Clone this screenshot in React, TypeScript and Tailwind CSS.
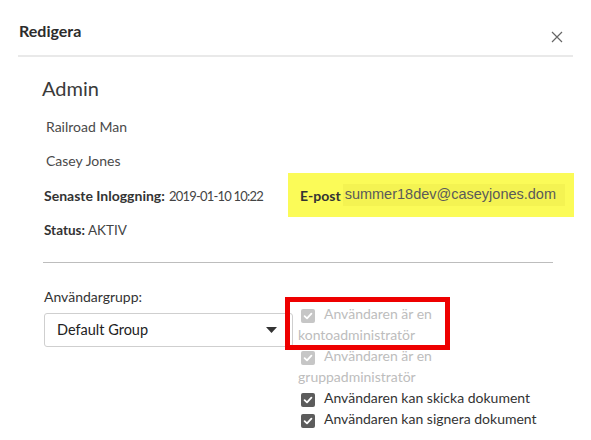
function Check({ disabled }: { disabled?: boolean }) {
  return (
    <span
      className={`inline-flex items-center justify-center w-[14px] h-[14px] rounded-[2px] ml-[3px] mr-[9px] align-[-2px] ${disabled ? 'bg-[#c6c6c6]' : 'bg-[#5c5c5c]'}`}
    >
      <svg width="10" height="10" viewBox="0 0 10 10">
        <path d="M1.6 5.2 L4 7.4 L8.4 2.6" fill="none" stroke="#fff" strokeWidth="1.8" strokeLinecap="round" strokeLinejoin="round" />
      </svg>
    </span>
  );
}

export default function App() {
  return (
    <div className="w-[591px] h-[440px] bg-white overflow-hidden relative text-[#333]" style={{ fontFamily: 'Lato, "Open Sans", sans-serif' }}>
      {/* header */}
      <div className="mx-[18px] flex items-start justify-between pt-[20px] h-[57px] border-b-2 border-[#e9e9e9]">
        <h2 className="ml-px text-[16px] leading-[22px] font-bold text-[#2c2c2c]">Redigera</h2>
        <svg width="12" height="12" viewBox="0 0 12 12" className="mt-[11px] mr-[10px]">
          <path d="M1 1 L11 11 M11 1 L1 11" stroke="#666" strokeWidth="1.2" />
        </svg>
      </div>

      <div className="pl-[43px] pr-[38px]">
        <div className="ml-[-1px] pt-[18px] text-[20px] leading-[26px] text-[#3a3a3a]">Admin</div>
        <div className="ml-[3px] mt-[16px] text-[14px] leading-[20px] text-[#4a4a4a]">Railroad Man</div>
        <div className="ml-[3px] mt-[14px] text-[14px] leading-[20px] text-[#4a4a4a]">Casey Jones</div>

        <div className="flex items-center mt-[2px] -mr-[21px]">
          <div className="w-[244px] ml-px text-[#444]">
            <span className="font-bold text-[14px] text-[#333]">Senaste Inloggning:</span>{' '}
            <span className="text-[13px] tracking-[-0.8px]">2019-01-10 10:22</span>
          </div>
          <div className="flex-1 h-[44px] bg-[#fbfb58] flex items-center pl-[12px] pr-[9px]">
            <span className="font-bold text-[14px] text-[#333]">E-post</span>
            <span className="ml-[2px] flex-1 h-[22px] bg-[#f4f352] flex items-center pl-[2px] text-[14.5px] text-[#5a5a5a]" style={{ fontFamily: '"Liberation Sans", Arial, sans-serif' }}>
              summer18dev@caseyjones.dom
            </span>
          </div>
        </div>

        <div className="ml-px mt-[3px] text-[13.5px] text-[#444]">
          <span className="font-bold text-[#333]">Status:</span> AKTIV
        </div>

        <div className="mt-[22px] border-t border-[#bdbdbd] w-[510px]" />

        <div className="flex mt-[25px] ml-px">
          <div className="w-[249px]">
            <div className="text-[14px] leading-[18px] text-[#333]">Användargrupp:</div>
            <div className="mt-[7px] h-[34px] border border-[#cfcfcf] rounded-[3px] flex items-center justify-between pl-[12px] pr-[15px]">
              <span className="text-[14.5px] text-[#222]">Default Group</span>
              <svg width="11" height="6" viewBox="0 0 11 6">
                <path d="M0 0 H11 L5.5 6 Z" fill="#333" />
              </svg>
            </div>
          </div>
          <div className="ml-[5px] mt-[15px] w-[245px] text-[14px] leading-[21px]">
            <div className="text-[#bdbdbd]">
              <Check disabled />Användaren är en kontoadministratör
            </div>
            <div className="text-[#bdbdbd]">
              <Check disabled />Användaren är en gruppadministratör
            </div>
            <div className="text-[#333]">
              <Check />Användaren kan skicka dokument
            </div>
            <div className="text-[#333]">
              <Check />Användaren kan signera dokument
            </div>
          </div>
        </div>
      </div>

      {/* annotation */}
      <div className="absolute left-[285px] top-[297px] w-[165px] h-[53px] border-[5px] border-[#ee0000]" />
    </div>
  );
}
